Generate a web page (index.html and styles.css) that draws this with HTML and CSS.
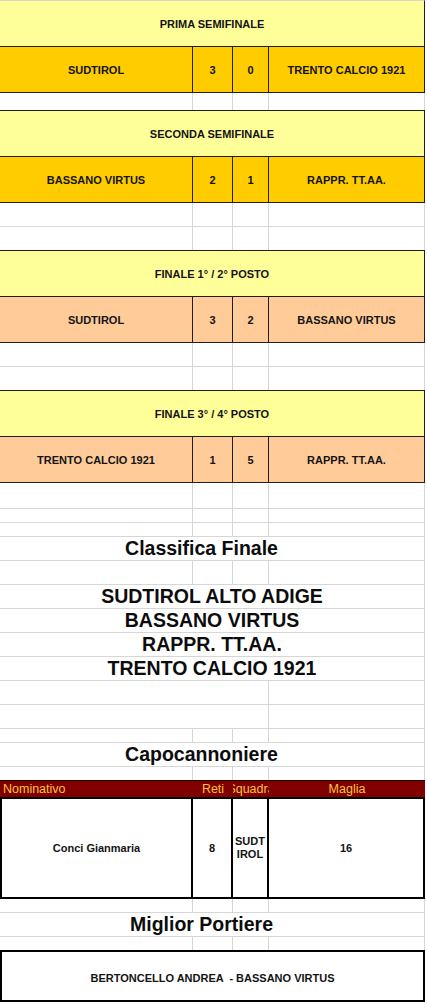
FILE: index.html
```html
<!DOCTYPE html>
<html lang="it">
<head>
<meta charset="utf-8">
<title>Fase finale</title>
<link rel="stylesheet" href="styles.css">
</head>
<body>
<div class="sheet">

  <section class="match first">
    <div class="m-head">PRIMA SEMIFINALE</div>
    <div class="m-row semi">
      <div class="c">SUDTIROL</div><div class="c">3</div><div class="c">0</div><div class="c">TRENTO CALCIO 1921</div>
    </div>
  </section>
  <div class="row v h17 nb"><span></span><span></span><span></span><span></span></div>

  <section class="match">
    <div class="m-head">SECONDA SEMIFINALE</div>
    <div class="m-row semi">
      <div class="c">BASSANO VIRTUS</div><div class="c">2</div><div class="c">1</div><div class="c">RAPPR. TT.AA.</div>
    </div>
  </section>
  <div class="row v h24"><span></span><span></span><span></span><span></span></div>
  <div class="row v h23 nb"><span></span><span></span><span></span><span></span></div>

  <section class="match">
    <div class="m-head">FINALE 1° / 2° POSTO</div>
    <div class="m-row fin">
      <div class="c">SUDTIROL</div><div class="c">3</div><div class="c">2</div><div class="c">BASSANO VIRTUS</div>
    </div>
  </section>
  <div class="row v h24"><span></span><span></span><span></span><span></span></div>
  <div class="row v h23 nb"><span></span><span></span><span></span><span></span></div>

  <section class="match">
    <div class="m-head">FINALE 3° / 4° POSTO</div>
    <div class="m-row fin">
      <div class="c">TRENTO CALCIO 1921</div><div class="c">1</div><div class="c">5</div><div class="c">RAPPR. TT.AA.</div>
    </div>
  </section>
  <div class="row v h26"><span></span><span></span><span></span><span></span></div>
  <div class="row v h14"><span></span><span></span><span></span><span></span></div>
  <div class="row v h14"><span></span><span></span><span></span><span></span></div>

  <div class="row title h24"><span>Classifica Finale</span></div>
  <div class="row v h24"><span></span><span></span><span></span><span></span></div>
  <div class="row name h24"><span>SUDTIROL ALTO ADIGE</span></div>
  <div class="row name h24"><span>BASSANO VIRTUS</span></div>
  <div class="row name h24"><span>RAPPR. TT.AA.</span></div>
  <div class="row name h24"><span>TRENTO CALCIO 1921</span></div>
  <div class="row half h24"><span></span><span></span></div>
  <div class="row half h24"><span></span><span></span></div>
  <div class="row v h14"><span></span><span></span><span></span><span></span></div>

  <div class="row title h24"><span>Capocannoniere</span></div>
  <div class="row v h13 nb"><span></span><span></span><span></span><span></span></div>

  <div class="scorer-head">
    <div class="sh left">Nominativo</div>
    <div class="sh">Reti</div>
    <div class="sh clip"><span>Squadra</span></div>
    <div class="sh">Maglia</div>
  </div>
  <div class="scorer">
    <div class="c">Conci Gianmaria</div>
    <div class="c">8</div>
    <div class="c stack">SUDT<br>IROL</div>
    <div class="c">16</div>
  </div>
  <div class="row v h14"><span></span><span></span><span></span><span></span></div>

  <div class="row title h24"><span>Miglior Portiere</span></div>
  <div class="row v h13 nb"><span></span><span></span><span></span><span></span></div>

  <div class="keeper">BERTONCELLO ANDREA  - BASSANO VIRTUS</div>

</div>
</body>
</html>
```

FILE: styles.css
```css
html, body {
  margin: 0;
  padding: 0;
  background: #ffffff;
}

.sheet {
  width: 427px;
  font-family: "Liberation Sans", Arial, sans-serif;
  color: #141414;
  font-weight: bold;
  font-size: 11px;
}

/* ---- match blocks ---- */
.match {
  width: 425px;
  box-sizing: border-box;
  border-top: 1px solid #1e1e1e;
  border-right: 1px solid #1e1e1e;
}
.match.first {
  border-top-color: #d6d6d6;
}
.m-head {
  height: 46px;
  box-sizing: border-box;
  border-bottom: 1px solid #1e1e1e;
  background: #ffff99;
  display: flex;
  align-items: center;
  justify-content: center;
}
.m-row {
  display: grid;
  grid-template-columns: 193px 40px 36px 155px;
  height: 46px;
  box-sizing: border-box;
  border-bottom: 1px solid #1e1e1e;
}
.m-row.semi { background: #ffcc00; }
.m-row.fin { background: #ffcc99; }
.m-row .c {
  display: flex;
  align-items: center;
  justify-content: center;
  border-right: 1px solid #1e1e1e;
}
.m-row .c:last-child { border-right: none; }

/* ---- grid rows ---- */
.row {
  display: grid;
  width: 425px;
  box-sizing: border-box;
  border-bottom: 1px solid #d6d6d6;
}
.row.nb { border-bottom: none; }
.row > span {
  border-right: 1px solid #d6d6d6;
}
.row.v { grid-template-columns: 193px 40px 36px 156px; }
.row.half { grid-template-columns: 269px 156px; }

.h13 { height: 13px; }
.h14 { height: 14px; }
.h17 { height: 17px; }
.h23 { height: 23px; }
.h24 { height: 24px; }
.h26 { height: 26px; }

.row.title > span,
.row.name > span {
  display: flex;
  align-items: center;
  justify-content: center;
  font-size: 19.5px;
  line-height: 1;
  color: #0c0c0c;
}
.row.title > span {
  padding-right: 21px;
}
.row.name > span {
  padding-top: 1px;
}

/* ---- capocannoniere ---- */
.scorer-head {
  display: grid;
  grid-template-columns: 193px 40px 36px 156px;
  width: 425px;
  height: 19px;
  box-sizing: border-box;
  background: #800000;
  border-top: 1px solid #1a0000;
  border-bottom: 2px solid #000000;
  color: #f7c43a;
  font-weight: normal;
  font-size: 12.5px;
}
.sh {
  display: flex;
  align-items: center;
  justify-content: center;
  overflow: hidden;
  white-space: nowrap;
}
.sh.left {
  justify-content: flex-start;
  padding-left: 3px;
}
.sh.clip span { flex: none; }

.scorer {
  display: grid;
  grid-template-columns: 191px 40px 36px 156px;
  width: 425px;
  height: 100px;
  box-sizing: border-box;
  border-left: 2px solid #000000;
  border-bottom: 2px solid #000000;
}
.scorer .c {
  display: flex;
  align-items: center;
  justify-content: center;
  text-align: center;
  border-right: 2px solid #000000;
}
.scorer .stack {
  line-height: 13px;
}

/* ---- portiere ---- */
.keeper {
  width: 425px;
  height: 52px;
  box-sizing: border-box;
  border: 2px solid #000000;
  display: flex;
  align-items: center;
  justify-content: center;
  padding-top: 3px;
  white-space: pre;
}
```
